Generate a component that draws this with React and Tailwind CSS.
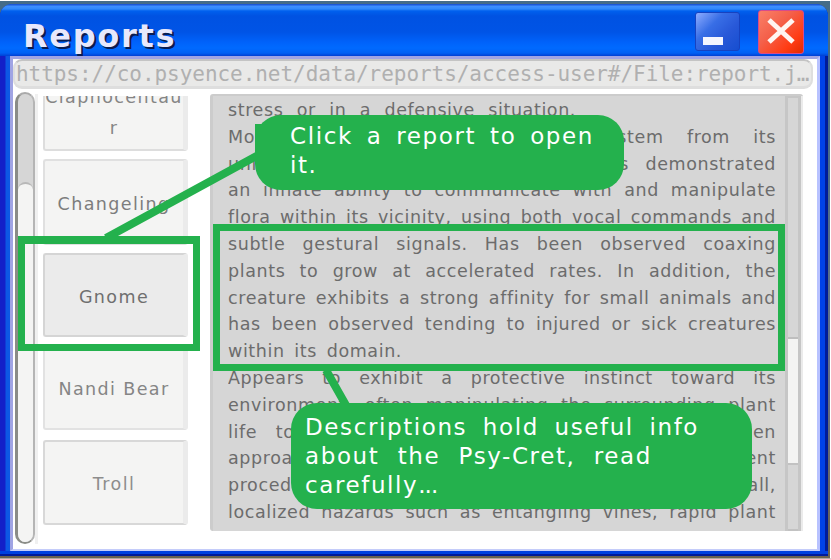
const REPORTS = [
  { name: "Claphocentau\nr", box: "-mt-[30px] h-[85px] pt-[8px] bg-[#f4f4f3] border-[#dddddd] text-[#858585]" },
  { name: "Changeling", box: "mt-[8px] h-[86px] pt-[4px] bg-[#f4f4f3] border-[#e0e0e0] text-[#7d7d7d]" },
  { name: "Gnome", box: "mt-[8px] h-[84px] pt-[4px] bg-[#ebebeb] border-[#d5d5d5] text-[#6f6f6f]" },
  { name: "Nandi Bear", box: "mt-[9px] h-[84px] pt-[3px] bg-[#f4f4f3] border-[#e2e2e2] text-[#858585]" },
  { name: "Troll", box: "mt-[10px] h-[85px] pt-[3px] bg-[#f4f4f3] border-[#d8d8d8] text-[#8d8d8d]" },
];

const LINES = [
  { text: "stress or in a defensive situation.", end: "w-[348px]" },
  { text: "Moves to protect the local ecosystem from its" },
  { text: "unique habitat. The creature also has demonstrated" },
  { text: "an innate ability to communicate with and manipulate" },
  { text: "flora within its vicinity, using both vocal commands and" },
  { text: "subtle gestural signals. Has been observed coaxing" },
  { text: "plants to grow at accelerated rates. In addition, the" },
  { text: "creature exhibits a strong affinity for small animals and" },
  { text: "has been observed tending to injured or sick creatures" },
  { text: "within its domain.", end: "w-[174px]" },
  { text: "Appears to exhibit a protective instinct toward its" },
  { text: "environment, often manipulating the surrounding plant" },
  { text: "life to defend its territory from any others when" },
  { text: "approached. Handlers must follow containment" },
  { text: "procedures and remain watchful for any small," },
  { text: "localized hazards such as entangling vines, rapid plant" },
];

function TitleBar() {
  return (
    <header className="flex h-[52px] shrink-0 items-start rounded-t-[12px] bg-[linear-gradient(180deg,#1c58d8_0px,#1c58d8_1px,#3f90ff_2px,#3088fa_5px,#0060ee_7px,#0052e2_12px,#0054e6_28px,#0062fa_38px,#006aff_44px,#0060f4_49px,#003fd4_52px)] pl-[23px] pr-[24px]">
      <h1 className="grow pt-[10px] font-['DejaVu_Sans'] text-[32px] font-bold leading-[44px] tracking-[1.7px] text-[#e8e8fc] [text-shadow:2px_2px_0_#0a1c50]">
        Reports
      </h1>
      <div className="mt-[8px] flex h-[39px] w-[45px] items-start rounded-[3px] border border-[#1742c0] bg-[linear-gradient(135deg,#8eacff_0%,#386ee6_35%,#2858d8_65%,#164ed0_100%)] pl-[7px] pt-[24px]">
        <div className="h-[8px] w-[20px] bg-[#f4f5ff]" />
      </div>
      <div className="ml-[18px] mt-[6px] flex h-[44px] w-[46px] items-center justify-center rounded-[3px] border border-[#d74b8c] bg-[linear-gradient(135deg,#fa8068_0%,#f4604a_40%,#ff3c14_75%,#e22a00_100%)]">
        <svg className="-mt-[2px] h-[28px] w-[30px]" viewBox="0 0 30 28" stroke="#fff5f2" strokeWidth="5" fill="none">
          <path d="M3 3 L27 25 M27 3 L3 25" />
        </svg>
      </div>
    </header>
  );
}

function ReportList() {
  return (
    <div className="flex w-[145px] flex-col overflow-hidden">
      {REPORTS.map((r) => (
        <div
          key={r.name}
          className={"flex shrink-0 items-center justify-center whitespace-pre rounded-[3px] border-2 border-r-[5px] border-r-[#ebebeb] text-center font-['DejaVu_Sans'] text-[17.5px] leading-[31px] tracking-[1.4px] " + r.box}
        >
          {r.name}
        </div>
      ))}
    </div>
  );
}

function Description() {
  return (
    <section className="ml-[22px] flex h-[437px] w-[593px] rounded-[3px] border-l-[3px] border-t-2 border-[#cccccc] bg-[#d6d6d6]">
      <div className="ml-[15px] w-[548px] shrink-0 overflow-hidden whitespace-nowrap pt-px font-['DejaVu_Sans'] text-[17.5px] leading-[26.8px] tracking-[0.6px] text-[#6c6c6c]">
        {LINES.map((l) => (
          <p key={l.text} className={"[text-align-last:justify] " + (l.end || "w-full")}>
            {l.text}
          </p>
        ))}
      </div>
      <div className="ml-[9px] flex w-[16px] shrink-0 flex-col border-x-[3px] border-t-2 border-[#c6c6c6]">
        <div className="h-[239px]" />
        <div className="h-[126px] border-t-2 border-[#bebebe] bg-[#f4f4f3]" />
        <div className="grow border-y-2 border-[#c2c2c2]" />
      </div>
      <div className="w-[3px] bg-[#ebebeb]" />
    </section>
  );
}

function Annotations() {
  return (
    <div className="absolute -top-px left-0 h-[559px] w-[831px] font-['DejaVu_Sans'] text-[23px] leading-[29px] tracking-[1.6px] text-white">
      <svg className="absolute inset-0" width="831" height="559" stroke="#24b14d" strokeWidth="8">
        <path d="M106 238 L262 153 M326 370 L347 407" />
        <rect x="255" y="124" width="12" height="30" fill="#24b14d" stroke="none" />
      </svg>
      <div className="absolute left-[18px] top-[236px] h-[115px] w-[182px] border-[7px] border-t-8 border-[#24b14d]" />
      <div className="absolute left-[213px] top-[224px] h-[147px] w-[572px] border-[7px] border-[#24b14d]" />
      <div className="absolute left-[255px] top-[115px] h-[75px] w-[369px] rounded-[26px] bg-[#24b14d] pl-[35px] pt-[7px]">
        <p className="w-[304px] whitespace-nowrap [text-align-last:justify]">Click a report to open</p>
        <p>it.</p>
      </div>
      <div className="absolute left-[291px] top-[403px] h-[106px] w-[461px] rounded-[26px] bg-[#24b14d] pl-[14px] pt-[10px]">
        <p className="w-[394px] whitespace-nowrap [text-align-last:justify]">Descriptions hold useful info</p>
        <p className="w-[347px] whitespace-nowrap [text-align-last:justify]">about the Psy-Cret, read</p>
        <p>
          carefully<span className="tracking-[-1px]">...</span>
        </p>
      </div>
    </div>
  );
}

export default function App() {
  return (
    <div className="relative h-[559px] w-[831px] overflow-hidden border-b border-r border-t border-b-[#b0aaa2] border-r-white border-t-white bg-[linear-gradient(180deg,#456c88_0%,#456c88_20%,#64718a_65%,#6b6250_100%)]">
      <div className="mt-[3px] flex h-[552px] w-[828px] flex-col rounded-t-[12px] bg-[linear-gradient(90deg,#1320c8_0px,#1320c8_5px,#0d58e4_6px,#0d58e4_50%,#0042e8_50%,#0042e8_825px,#001c9a_825px)]">
        <TitleBar />
        <main className="ml-[10px] mr-[8px] flex h-[495px] flex-col border-x-[3px] border-b-2 border-t-[3px] border-[#a0a4e4] border-b-[#c4ccfa] border-r-[#b8c2ff] bg-white">
          <div className="h-[30px] w-[800px] shrink-0 overflow-hidden whitespace-nowrap rounded-[9px] border-x-2 border-b-[3px] border-t-2 border-[#dedede] border-t-[#c4c4c4] bg-[#e9e9e8] pl-px font-['DejaVu_Sans_Mono'] text-[21px] leading-[27px] tracking-[-0.05px] text-[#b0b0b0]">
            https://co.psyence.net/data/reports/access-user#/File:report.j…
          </div>
          <div className="flex pt-[5px]">
            <div className="-mt-[2px] ml-[2px] h-[452px] w-[20px] overflow-hidden rounded-[10px] border-b-2 border-l-[3px] border-r-2 border-t-2 border-[#8a8c87] border-r-[#b5b5b5] border-t-[#aaaaaa] bg-[#d6d6d6] pt-[88px]">
              <div className="h-[360px] rounded-t-[9px] border-t-2 border-[#b8b8b8] bg-[#f4f4f3]" />
            </div>
            <div className="w-[3px] bg-[#f0f0f0]" />
            <div className="ml-[5px] mt-[2px] flex h-[440px]">
              <ReportList />
            </div>
            <Description />
          </div>
        </main>
        <div className="h-[3px] shrink-0 bg-[#0040e0]" />
        <div className="h-[2px] shrink-0 bg-[#001a9a]" />
      </div>
      <Annotations />
    </div>
  );
}
